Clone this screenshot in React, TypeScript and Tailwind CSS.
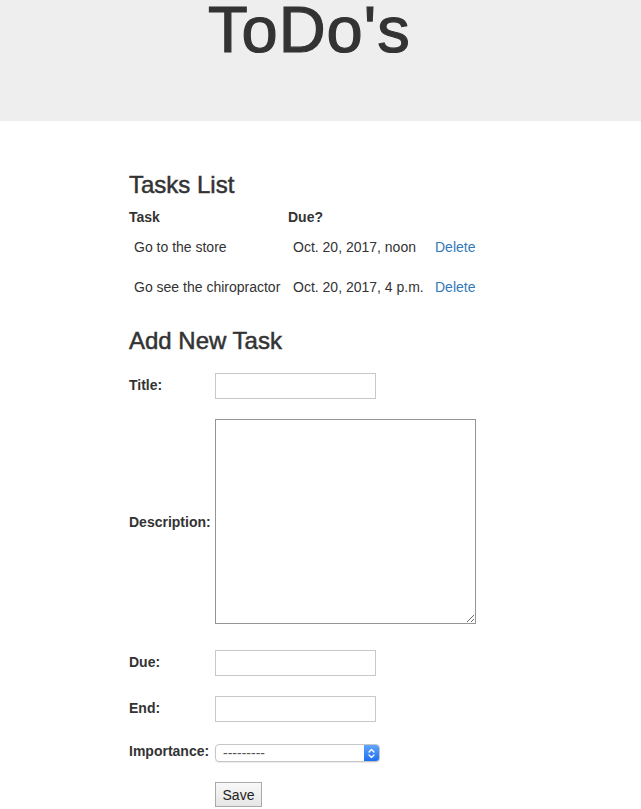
import React from "react";

const TASKS = [
  { id: 1, title: "Go to the store", due: "Oct. 20, 2017, noon" },
  { id: 2, title: "Go see the chiropractor", due: "Oct. 20, 2017, 4 p.m." },
];

export default function App() {
  return (
    <div className="min-h-[809px] bg-white text-[#333] text-[14px] leading-[20px] font-['Liberation_Sans',Arial,sans-serif]">
      {/* Jumbotron header */}
      <header className="h-[121px] bg-[#eeeeee] pl-[208px]">
        <h1 className="text-[65px] leading-[60px] tracking-[1px] font-normal [-webkit-text-stroke:1.2px_#333]">ToDo's</h1>
      </header>

      <main className="pl-[129px] pt-[50px]">
        {/* Tasks list */}
        <h3 className="text-[24px] leading-[27px] font-medium mb-[9px] [-webkit-text-stroke:0.5px_#333]">Tasks List</h3>
        <table className="border-collapse">
          <thead>
            <tr>
              <th className="p-0 w-[159px] text-left font-bold">Task</th>
              <th className="p-0 w-[142px] text-left font-bold">Due?</th>
              <th className="p-0" />
            </tr>
          </thead>
          <tbody>
            {TASKS.map(task => (
              <tr key={task.id}>
                <td className="px-[5px] py-[10px] whitespace-nowrap">{task.title}</td>
                <td className="px-[5px] py-[10px] whitespace-nowrap">{task.due}</td>
                <td className="px-[5px] py-[10px]">
                  <a href="#" className="text-[#337ab7]">Delete</a>
                </td>
              </tr>
            ))}
          </tbody>
        </table>

        {/* New task form */}
        <h3 className="text-[24px] leading-[27px] font-medium mt-[20px] [-webkit-text-stroke:0.5px_#333]">Add New Task</h3>
        <form className="flex flex-col" onSubmit={e => e.preventDefault()}>
          <div className="flex items-center mt-[19px]">
            <label className="w-[86px] font-bold mb-[2px]">Title:</label>
            <input type="text" className="w-[161px] h-[26px] border border-[#c8c8c8] bg-white outline-none" />
          </div>

          <div className="flex items-center mt-[20px]">
            <label className="w-[86px] font-bold">Description:</label>
            <textarea className="w-[261px] h-[205px] border border-[#959595] bg-white outline-none block" />
          </div>

          <div className="flex items-center mt-[26px]">
            <label className="w-[86px] font-bold mb-[2px]">Due:</label>
            <input type="text" className="w-[161px] h-[26px] border border-[#c8c8c8] bg-white outline-none" />
          </div>

          <div className="flex items-center mt-[20px]">
            <label className="w-[86px] font-bold mb-[2px]">End:</label>
            <input type="text" className="w-[161px] h-[26px] border border-[#c8c8c8] bg-white outline-none" />
          </div>

          <div className="flex items-start mt-[22px]">
            <label className="w-[86px] font-bold -mt-[3px]">Importance:</label>
            <div className="flex w-[165px] h-[18px] rounded-[4px] border border-[#c6c6c6] bg-white shadow-[0_1px_1px_rgba(0,0,0,0.08)] overflow-hidden">
              <span className="flex-1 pl-[7px] text-[14px] leading-[16px] text-[#555]">---------</span>
              <span className="w-[15px] h-full flex items-center justify-center bg-gradient-to-b from-[#62a6fa] to-[#1b6ef2]">
                <svg width="7" height="11" viewBox="0 0 7 11" fill="none" stroke="white" strokeWidth="1.3" strokeLinecap="round" strokeLinejoin="round">
                  <path d="M1 4 L3.5 1.5 L6 4" />
                  <path d="M1 7 L3.5 9.5 L6 7" />
                </svg>
              </span>
            </div>
          </div>

          <div className="flex mt-[20px] pl-[86px]">
            <button type="submit" className="w-[47px] h-[25px] border border-[#a9a9a9] bg-gradient-to-b from-[#f8f8f8] to-[#e6e6e6] text-[14px] text-[#222]">
              Save
            </button>
          </div>
        </form>
      </main>
    </div>
  );
}
